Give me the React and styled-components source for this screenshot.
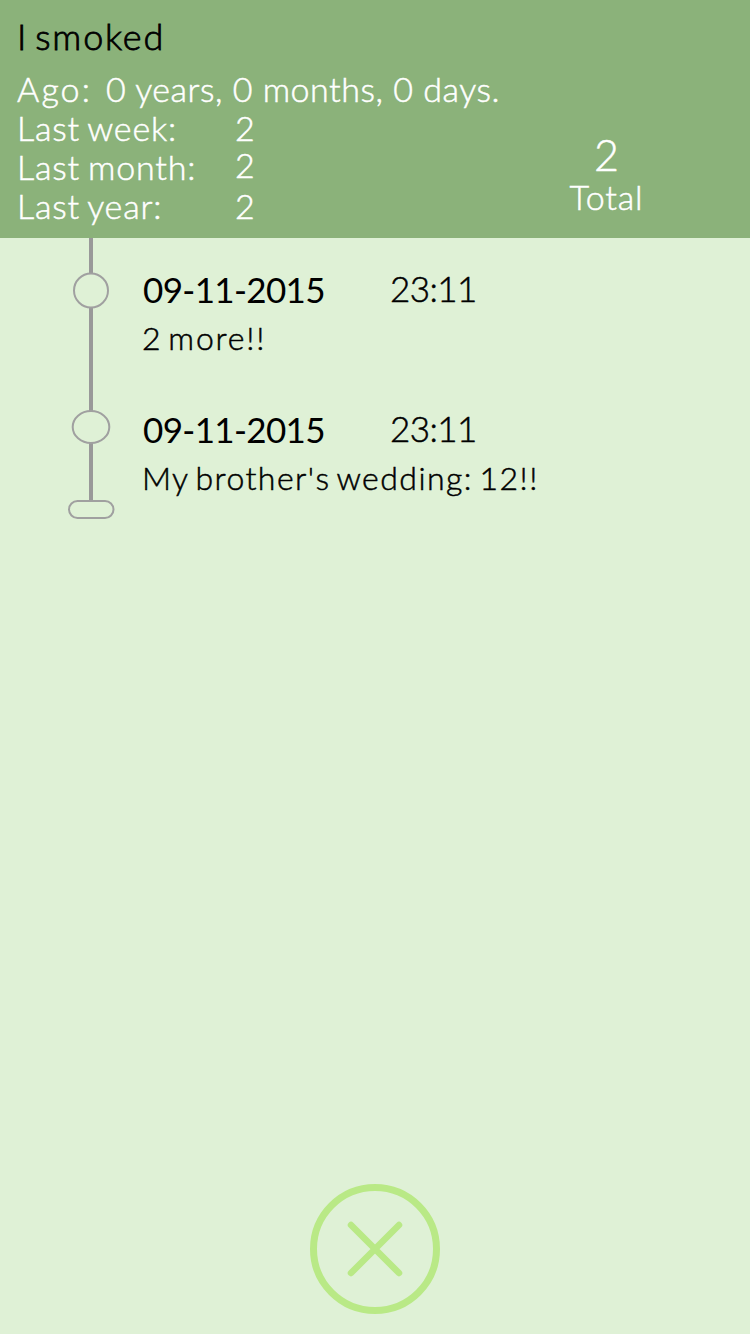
import React from "react";
import styled, { createGlobalStyle } from "styled-components";

const GlobalStyle = createGlobalStyle`
  * { box-sizing: border-box; }
  body { margin: 0; background: #dff1d6; font-family: Lato, "Open Sans", sans-serif; }
`;

const Screen = styled.main`
  width: 750px;
  height: 1334px;
  display: flex;
  flex-direction: column;
  overflow: hidden;
  background: #dff1d6;
  color: #000;
`;

const Header = styled.header`
  height: 238px;
  flex: none;
  display: grid;
  grid-template-columns: 538px 1fr;
  padding-top: 12px;
  background: #8bb27a;
`;

const Summary = styled.section`
  padding-left: 17px;
`;

const Text = styled.span`
  display: block;
  white-space: pre;
  font-weight: ${(p) => p.$weight || 300};
  font-size: ${(p) => p.$size || 34}px;
  letter-spacing: ${(p) => p.$track || 0}px;
  word-spacing: ${(p) => p.$gap || 0}px;
  -webkit-text-stroke: ${(p) => (p.$weight ? 0 : 0.5)}px currentColor;
`;

const Title = styled.h1`
  margin: 0 0 9px;
  font-size: 36px;
  font-weight: 300;
  line-height: 48px;
  letter-spacing: 1.8px;
  word-spacing: -4.5px;
  -webkit-text-stroke: 0.8px currentColor;
`;

const StatRow = styled.div`
  display: flex;
  height: 39px;
  line-height: 39px;
  color: #fff;
`;

const AgoLabel = styled(Text)`
  width: 89px;
`;

const StatLabel = styled(Text)`
  width: 218px;
`;

const StatValue = styled(Text)`
  margin-top: ${(p) => p.$shift || 0}px;
`;

const Total = styled.section`
  display: flex;
  flex-direction: column;
  align-items: center;
  width: 137px;
  padding-top: 119px;
  color: #fff;
`;

const TotalCount = styled(Text)`
  line-height: 48px;
`;

const TotalLabel = styled(Text)`
  line-height: 36px;
`;

const Content = styled.section`
  flex: 1;
  display: flex;
`;

const Timeline = styled.svg`
  flex: none;
  width: 143px;
  height: 290px;
`;

const Entries = styled.div`
  padding-top: 29px;
`;

const Entry = styled.article`
  height: 140px;
`;

const EntryHead = styled.div`
  display: flex;
  height: 44px;
`;

const EntryDate = styled(Text)`
  width: 247px;
  line-height: 44px;
`;

const EntryTime = styled(Text)`
  line-height: 42px;
`;

const EntryNote = styled(Text)`
  margin-left: -1px;
  line-height: 53px;
`;

const Footer = styled.footer`
  height: 150px;
  flex: none;
  display: flex;
  justify-content: center;
`;

const CloseButton = styled.button`
  width: 130px;
  height: 130px;
  padding: 0;
  border: 0;
  background: none;
`;

const stats = [
  { label: "Last week:", value: "2" },
  { label: "Last month:", value: "2", shift: -2 },
  { label: "Last year:", value: "2" },
];

const entries = [
  { date: "09-11-2015", time: "23:11", note: "2 more!!", track: 1.8, gap: -4.5 },
  { date: "09-11-2015", time: "23:11", note: "My brother's wedding: 12!!", track: 1.45, gap: -3.5 },
];

export default function App() {
  return (
    <Screen>
      <GlobalStyle />
      <Header>
        <Summary>
          <Title>I smoked</Title>
          <StatRow>
            <AgoLabel $track={2.1}>Ago:</AgoLabel>
            <Text $track={0.53}>0 years, 0 months, 0 days.</Text>
          </StatRow>
          {stats.map((s) => (
            <StatRow key={s.label}>
              <StatLabel $track={0.8} $gap={-2}>{s.label}</StatLabel>
              <StatValue $shift={s.shift}>{s.value}</StatValue>
            </StatRow>
          ))}
        </Summary>
        <Total>
          <TotalCount $size={43}>2</TotalCount>
          <TotalLabel $track={0.8}>Total</TotalLabel>
        </Total>
      </Header>
      <Content>
        <Timeline viewBox="0 0 143 290" fill="none" stroke="#999">
          <path d="M91 0V35M91 69V173M91 205V262" strokeWidth="4" />
          <g stroke="#a0a0a0" strokeWidth="2">
            <circle cx="91" cy="52.5" r="17" />
            <ellipse cx="91" cy="189" rx="18.3" ry="16" />
            <rect x="69" y="263" width="44.5" height="17" rx="8.5" />
          </g>
        </Timeline>
        <Entries>
          {entries.map((e) => (
            <Entry key={e.note}>
              <EntryHead>
                <EntryDate $size={35} $weight={400} $track={-0.65}>{e.date}</EntryDate>
                <EntryTime $size={35} $track={-0.6}>{e.time}</EntryTime>
              </EntryHead>
              <EntryNote $size={32} $track={e.track} $gap={e.gap}>{e.note}</EntryNote>
            </Entry>
          ))}
        </Entries>
      </Content>
      <Footer>
        <CloseButton aria-label="Close">
          <svg width="130" height="130" viewBox="0 0 130 130" fill="none" stroke="#b9e986" strokeLinecap="round">
            <circle cx="65" cy="65" r="61.5" strokeWidth="7" />
            <path d="M41 41L89 89M89 41L41 89" strokeWidth="6.5" />
          </svg>
        </CloseButton>
      </Footer>
    </Screen>
  );
}
